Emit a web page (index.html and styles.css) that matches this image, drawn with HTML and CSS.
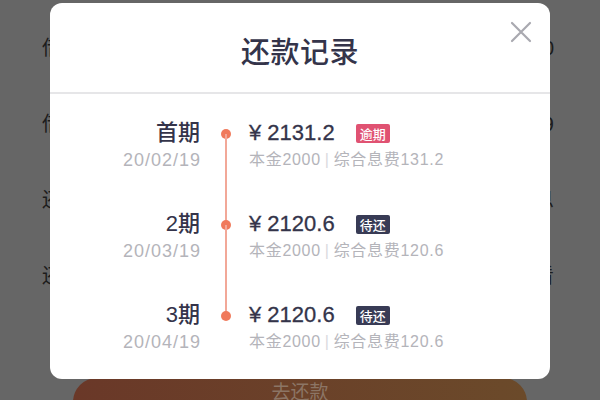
FILE: index.html
```html
<!DOCTYPE html>
<html lang="zh-CN">
<head>
<meta charset="utf-8">
<title>还款记录</title>
<link rel="stylesheet" href="styles.css">
</head>
<body>
<div class="page">
  <div class="page-rows">
    <div class="page-row"><span>借款金额</span><span>2000.00</span></div>
    <div class="page-row"><span>借款日期</span><span>2020/01/19</span></div>
    <div class="page-row"><span>还款方式</span><span>等额本息</span></div>
    <div class="page-row"><span>还款计划</span><span>查看</span></div>
  </div>
  <div class="page-btn">去还款</div>
</div>

<div class="modal">
  <div class="modal-head">
    <h1 class="modal-title">还款记录</h1>
    <span class="modal-close" aria-label="关闭">
      <svg width="22" height="22" viewBox="0 0 22 22"><path d="M2 2 L20 20 M20 2 L2 20" stroke="#a9a9b0" stroke-width="2.2" stroke-linecap="round" fill="none"/></svg>
    </span>
  </div>
  <div class="modal-body">
    <div class="rec">
      <div class="rec-left">
        <div class="rec-term">首期</div>
        <div class="rec-date">20/02/19</div>
      </div>
      <div class="rec-axis first"><span class="dot"></span></div>
      <div class="rec-right">
        <div class="rec-amount">¥ 2131.2<span class="badge badge-overdue">逾期</span></div>
        <div class="rec-sub">本金2000<span class="sep">|</span>综合息费131.2</div>
      </div>
    </div>
    <div class="rec">
      <div class="rec-left">
        <div class="rec-term">2期</div>
        <div class="rec-date">20/03/19</div>
      </div>
      <div class="rec-axis mid"><span class="dot"></span></div>
      <div class="rec-right">
        <div class="rec-amount">¥ 2120.6<span class="badge badge-pending">待还</span></div>
        <div class="rec-sub">本金2000<span class="sep">|</span>综合息费120.6</div>
      </div>
    </div>
    <div class="rec">
      <div class="rec-left">
        <div class="rec-term">3期</div>
        <div class="rec-date">20/04/19</div>
      </div>
      <div class="rec-axis last"><span class="dot"></span></div>
      <div class="rec-right">
        <div class="rec-amount">¥ 2120.6<span class="badge badge-pending">待还</span></div>
        <div class="rec-sub">本金2000<span class="sep">|</span>综合息费120.6</div>
      </div>
    </div>
  </div>
</div>
</body>
</html>
```

FILE: styles.css
```css
html, body {
  margin: 0;
  padding: 0;
}
body {
  width: 600px;
  height: 400px;
  overflow: hidden;
  position: relative;
  background: #666666;
  font-family: "Liberation Sans", "Noto Sans CJK SC", sans-serif;
}

/* underlying page (dimmed by overlay) */
.page {
  height: 400px;
  display: flex;
  flex-direction: column;
}
.page-rows {
  padding: 36px 46px 0 42px;
  display: flex;
  flex-direction: column;
  gap: 52px;
}
.page-row {
  display: flex;
  justify-content: space-between;
  height: 24px;
  line-height: 24px;
  font-size: 20px;
  color: #1c1c1c;
}
.page-btn {
  margin: auto 73px 0;
  height: 48px;
  transform: translateY(26px);
  border-radius: 24px;
  background: linear-gradient(90deg, #6a3828, #6b4a2a);
  color: #8c7565;
  font-size: 19px;
  text-align: center;
  line-height: 26px;
  font-family: "Noto Sans CJK SC", sans-serif;
}

/* modal */
.modal {
  position: absolute;
  left: 50px;
  top: 3px;
  width: 500px;
  background: #ffffff;
  border-radius: 12px;
}
.modal-head {
  position: relative;
  height: 89px;
  border-bottom: 2px solid #e6e6e8;
  display: flex;
  align-items: center;
  justify-content: center;
}
.modal-title {
  margin: 4px 0 0;
  font-family: "Noto Sans CJK SC", sans-serif;
  font-size: 29px;
  font-weight: 500;
  color: #34344a;
  letter-spacing: 0.5px;
}
.modal-close {
  position: absolute;
  right: 18px;
  top: 18px;
  width: 22px;
  height: 22px;
  display: flex;
}

.modal-body {
  padding: 24px 0 25px;
  display: flex;
  flex-direction: column;
  gap: 37px;
}
.rec {
  display: grid;
  grid-template-columns: 150px 48px 1fr;
  height: 54px;
}
.rec-left {
  text-align: right;
}
.rec-term {
  height: 30px;
  line-height: 30px;
  font-size: 22px;
  font-weight: 500;
  color: #34344a;
  font-family: "Liberation Sans", "Noto Sans CJK SC", sans-serif;
}
.rec-date {
  height: 24px;
  line-height: 24px;
  font-size: 18px;
  letter-spacing: 1px;
  margin-right: -1px;
  color: #b4b4ba;
}
.rec-axis {
  position: relative;
}
.dot {
  position: absolute;
  left: 21px;
  top: 11px;
  width: 10px;
  height: 10px;
  border-radius: 50%;
  background: #f07a5c;
}
.rec-axis.first::after,
.rec-axis.mid::after {
  content: "";
  position: absolute;
  left: 25px;
  top: 16px;
  width: 2px;
  height: 91px;
  background: #f2a898;
}
.rec-right {
  padding-left: 1px;
}
.rec-amount {
  height: 30px;
  line-height: 30px;
  font-size: 22px;
  font-weight: 400;
  color: #34344a;
  display: flex;
  align-items: center;
  -webkit-text-stroke: 0.3px #34344a;
}
.badge {
  display: inline-block;
  margin-left: 21px;
  height: 19px;
  line-height: 19px;
  padding: 0 4px;
  border-radius: 2px;
  font-size: 13px;
  font-weight: 500;
  color: #ffffff;
  -webkit-text-stroke: 0;
  font-family: "Noto Sans CJK SC", sans-serif;
}
.badge-overdue {
  background: #e05272;
}
.badge-pending {
  background: #383b55;
}
.rec-sub {
  height: 24px;
  line-height: 24px;
  font-size: 16px;
  letter-spacing: 0.7px;
  color: #b4b4ba;
}
.sep {
  color: #dadade;
  margin: 0 4px;
}
```
